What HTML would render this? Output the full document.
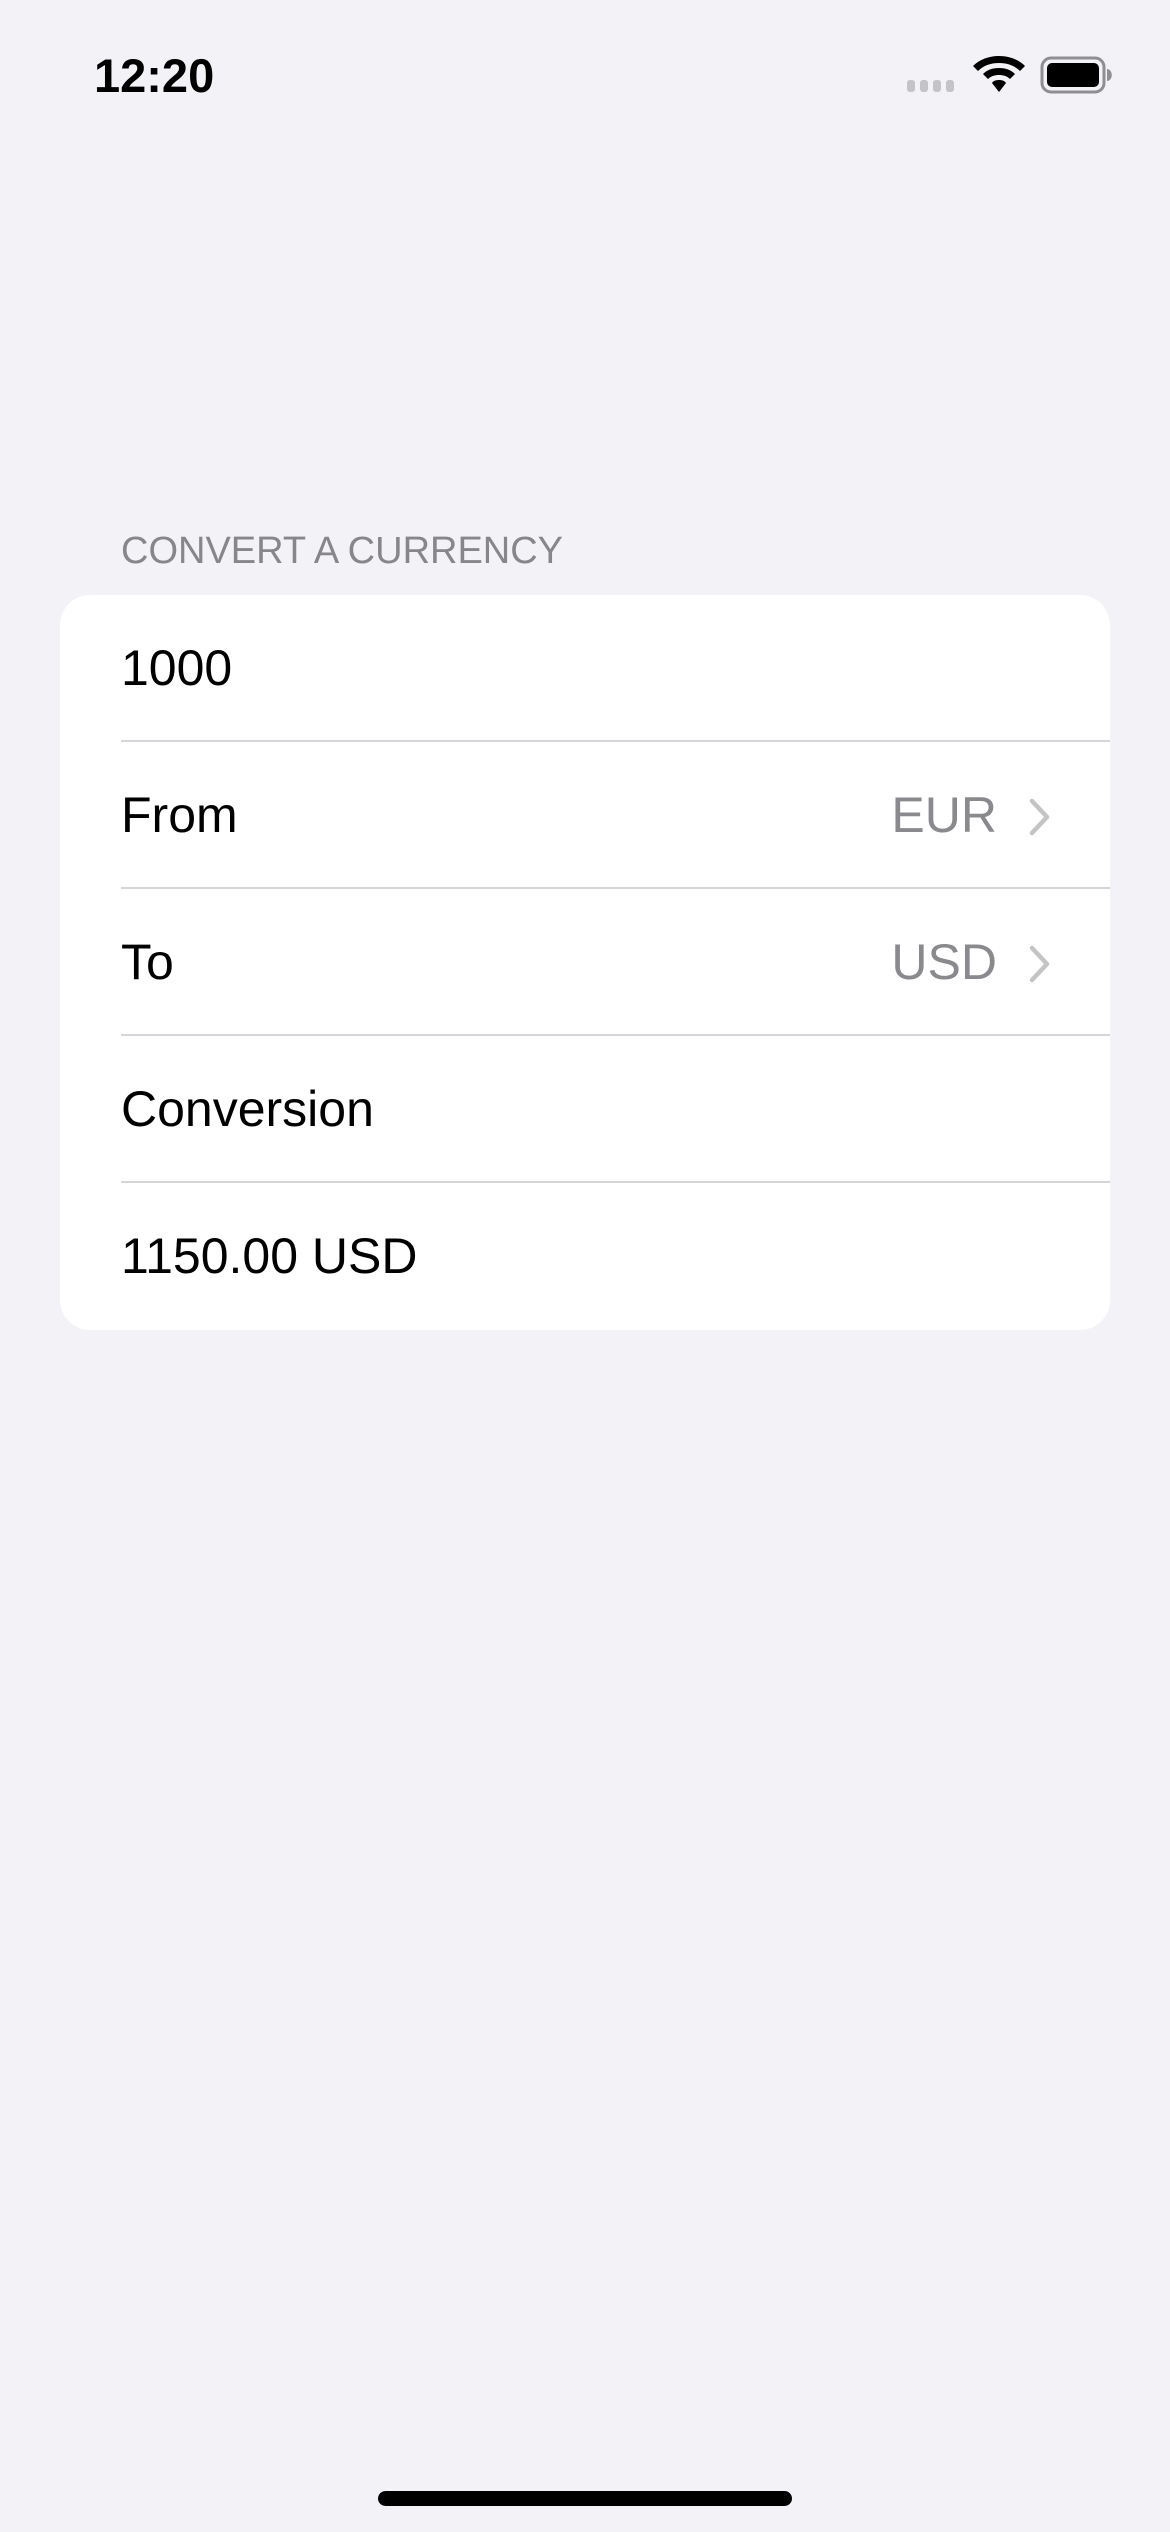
<!DOCTYPE html>
<html><head><meta charset="utf-8"><style>
body{margin:0;width:1170px;height:2532px;background:#f2f2f7;position:relative;overflow:hidden;font-family:"Liberation Sans",sans-serif;}
.time{position:absolute;left:94px;top:48px;font-size:47px;font-weight:bold;color:#000;letter-spacing:0px}
.hdr{position:absolute;left:121px;top:530px;font-size:38px;color:#86868b;letter-spacing:0}
.card{position:absolute;left:60px;top:595px;width:1050px;height:735px;background:#fff;border-radius:30px;overflow:hidden}
.row{position:absolute;left:61px;right:0;height:147px;font-size:50px;color:#000;line-height:147px}
.sep{position:absolute;left:61px;right:0;height:2px;background:#d6d6da}
.val{position:absolute;right:117px;top:0;color:#8a8a8e}
.chev{position:absolute;right:58px;top:56px}
.home{position:absolute;left:378px;top:2491px;width:414px;height:15px;border-radius:8px;background:#000}
</style></head><body>
<div class="time">12:20</div>
<svg style="position:absolute;left:905px;top:78px" width="52" height="16"><g fill="#c4c4c8"><rect x="2" y="2" width="8" height="12" rx="3"/><rect x="15" y="2" width="8" height="12" rx="3"/><rect x="28" y="2" width="8" height="12" rx="3"/><rect x="41" y="2" width="8" height="12" rx="3"/></g></svg>
<svg style="position:absolute;left:972px;top:54px" width="54" height="40" viewBox="0 0 54 40"><path d="M27 2C16 2 7 6 1 12l5 5c5-5 12-8 21-8s16 3 21 8l5-5C47 6 38 2 27 2z M27 14c-7 0-12 2-16 6l5 5c3-3 7-4 11-4s8 1 11 4l5-5c-4-4-9-6-16-6z M27 26c-3 0-6 1-7 3l7 9 7-9c-1-2-4-3-7-3z" fill="#000"/></svg>
<svg style="position:absolute;left:1040px;top:56px" width="72" height="38"><rect x="2" y="2" width="62" height="34" rx="9" fill="none" stroke="#8e8e93" stroke-width="3"/><rect x="7" y="7" width="52" height="24" rx="5" fill="#000"/><path d="M67 13a4 5 0 0 1 0 12z" fill="#8e8e93"/></svg>
<div class="hdr">CONVERT A CURRENCY</div>
<div class="card">
<div class="row" style="top:0">1000</div>
<div class="sep" style="top:145px"></div>
<div class="row" style="top:147px">From<span class="val" style="right:113px">EUR</span><svg class="chev" width="24" height="38"><path d="M4 3l15 16L4 35" fill="none" stroke="#c4c4c7" stroke-width="4.5" stroke-linecap="round" stroke-linejoin="round"/></svg></div>
<div class="sep" style="top:292px"></div>
<div class="row" style="top:294px">To<span class="val" style="right:113px">USD</span><svg class="chev" width="24" height="38"><path d="M4 3l15 16L4 35" fill="none" stroke="#c4c4c7" stroke-width="4.5" stroke-linecap="round" stroke-linejoin="round"/></svg></div>
<div class="sep" style="top:439px"></div>
<div class="row" style="top:441px">Conversion</div>
<div class="sep" style="top:586px"></div>
<div class="row" style="top:588px">1150.00 USD</div>
</div>
<div class="home"></div>
</body></html>
